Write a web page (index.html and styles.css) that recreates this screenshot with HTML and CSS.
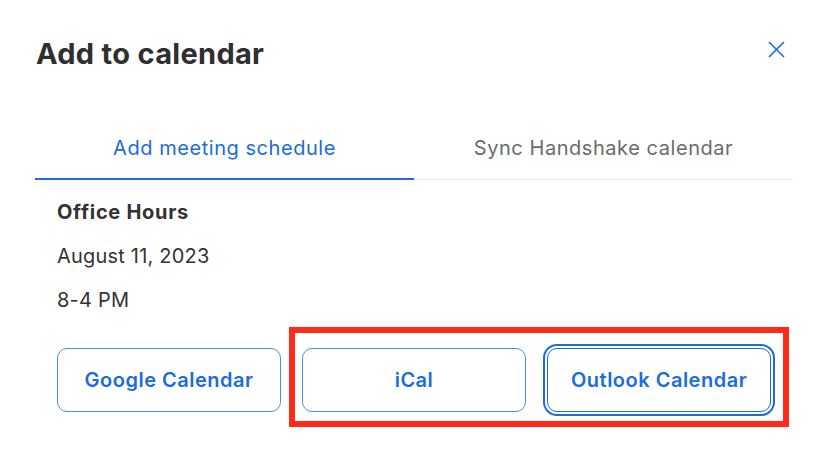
FILE: index.html
```html
<!DOCTYPE html>
<html>
<head>
<meta charset="utf-8">
<link rel="stylesheet" href="styles.css">
</head>
<body>
<div class="dialog">
  <div class="header">
    <h1 class="title">Add to calendar</h1>
    <button class="close" aria-label="Close">
      <svg width="17" height="17" viewBox="0 0 17 17"><path d="M1 1L16 16M16 1L1 16" stroke="#1a6ddb" stroke-width="1.6" fill="none"/></svg>
    </button>
  </div>
  <div class="tabs">
    <div class="tab active">Add meeting schedule</div>
    <div class="tab">Sync Handshake calendar</div>
  </div>
  <div class="content">
    <div class="line strong">Office Hours</div>
    <div class="line">August 11, 2023</div>
    <div class="line">8-4 PM</div>
    <div class="buttons">
      <button class="btn">Google Calendar</button>
      <button class="btn">iCal</button>
      <button class="btn focused">Outlook Calendar</button>
    </div>
  </div>
  <div class="highlight"></div>
</div>
</body>
</html>
```
FILE: styles.css
```css
* { box-sizing: border-box; }
html, body { margin: 0; padding: 0; background: #fff; }
body { font-family: Inter, "Noto Sans", sans-serif; color: #2f2f2f; }
.dialog { position: relative; width: 826px; height: 454px; padding: 37px 33px 0 35px; }
.header { display: flex; justify-content: space-between; align-items: flex-start; }
.title { margin: 0 0 0 1px; font-size: 29px; line-height: 34px; font-weight: 700; color: #2f2f2f; letter-spacing: 0.3px; }
.close { border: 0; background: none; padding: 0; margin: 4px 8px 0 0; width: 17px; height: 17px; display: block; cursor: pointer; }
.close svg { display: block; }
.tabs { display: flex; margin-top: 45px; border-bottom: 1px solid #e6e6e6; }
.tab { flex: 1; text-align: center; font-size: 20px; line-height: 24px; letter-spacing: 0.55px; padding: 20px 0 18px; color: #6b6b6b; margin-bottom: -1px; border-bottom: 2px solid transparent; }
.tab.active { color: #1a6ddb; border-bottom-color: #1a6ddb; }
.content { padding: 20px 0 0 22px; }
.line { font-size: 20px; line-height: 24px; margin-bottom: 20px; color: #333; letter-spacing: 0.2px; }
.line.strong { font-weight: 700; letter-spacing: 0.7px; }
.buttons { display: flex; gap: 21px; margin-top: 36px; }
.btn { width: 224px; height: 64px; border: 1px solid #4b8ce8; border-radius: 10px; background: #fff; color: #1a6ddb; font-family: inherit; font-size: 20px; font-weight: 600; letter-spacing: 0.5px; padding: 0; }
.btn.focused { border-color: #1a6ddb; box-shadow: 0 0 0 2px #fff, 0 0 0 4px #1a6ddb; }
.highlight { position: absolute; left: 289px; top: 327px; width: 500px; height: 100px; border: 6px solid #ff2a17; pointer-events: none; }
```
